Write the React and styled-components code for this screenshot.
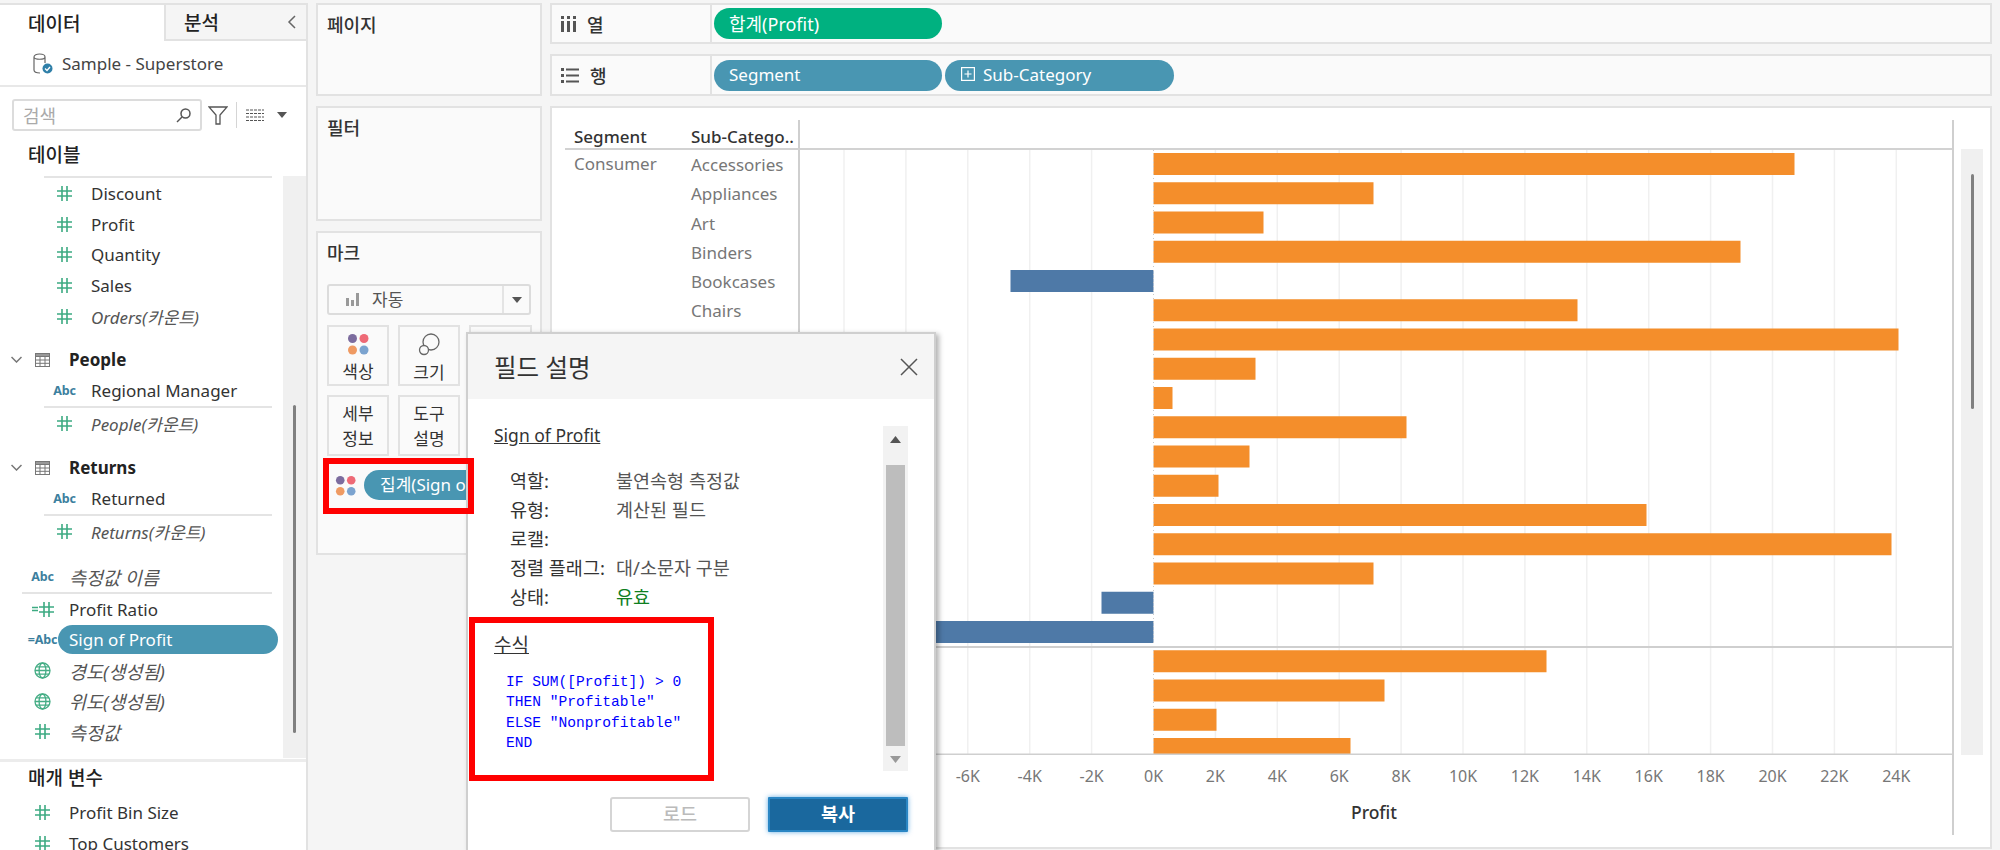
import React from 'react';
import styled, { createGlobalStyle } from 'styled-components';

const FONT = `"Noto Sans", "Noto Sans CJK KR", sans-serif`;

const Global = createGlobalStyle`
  html, body { margin: 0; padding: 0; background: #f5f5f5; }
  body { font-family: ${FONT}; color: #333; }
  * { box-sizing: border-box; }
`;

const Page = styled.div`
  position: relative;
  width: 2000px;
  height: 850px;
  overflow: hidden;
  background: #f5f5f5;
  display: grid;
  grid-template-columns: 308px 226px 1442px;
  column-gap: 8px;
  padding-top: 3px;
`;

/* ---------- sidebar ---------- */
const Sidebar = styled.aside`
  background: #fff;
  border-top: 2px solid #e2e2e2;
  border-right: 2px solid #e2e2e2;
  height: 847px;
  overflow: hidden;
  display: flex;
  flex-direction: column;
`;
const Tabs = styled.div`
  display: grid;
  grid-template-columns: 164px 1fr;
  height: 36px;
  flex: none;
`;
const Tab = styled.div`
  display: flex;
  align-items: center;
  justify-content: space-between;
  font-size: 19px;
  font-weight: 500;
  color: #222;
  padding: 0 10px 0 ${p => (p.$active ? 28 : 18)}px;
  ${p => !p.$active && `background:#f5f5f5;border-left:2px solid #e2e2e2;border-bottom:2px solid #e2e2e2;`}
`;
const Source = styled.div`
  flex: none;
  height: 46px;
  display: flex;
  align-items: center;
  gap: 9px;
  padding: 0 0 0 33px;
  font-size: 17px;
  color: #444;
  border-bottom: 2px solid #e8e8e8;
`;
const SearchRow = styled.div`
  flex: none;
  height: 32px;
  margin-top: 12px;
  padding-left: 12px;
  display: flex;
  align-items: center;
`;
const SearchBox = styled.div`
  width: 190px;
  height: 32px;
  border: 2px solid #dcdcdc;
  border-radius: 3px;
  display: flex;
  align-items: center;
  justify-content: space-between;
  padding: 0 9px 0 9px;
  font-size: 18px;
  color: #aaa;
`;
const ToolDivider = styled.span`
  width: 1px;
  height: 26px;
  background: #d5d5d5;
  margin: 0 9px 0 8px;
`;
const Heading = styled.div`
  flex: none;
  height: ${p => p.$h}px;
  display: flex;
  align-items: center;
  padding-left: 28px;
  font-size: 19px;
  font-weight: 500;
  color: #222;
`;
const ScrollArea = styled.div`
  position: relative;
  flex: none;
  height: 582px;
`;
const ScrollTrack = styled.div`
  position: absolute;
  left: 283px;
  top: 0;
  width: 23px;
  height: 100%;
  background: #f0f0f0;
`;
const ScrollThumb = styled.div`
  position: absolute;
  left: 10px;
  top: 229px;
  width: 3px;
  height: 328px;
  background: #808080;
  border-radius: 2px;
`;
const Rule = styled.div`
  height: 2px;
  margin-left: ${p => p.$left}px;
  width: ${p => 272 - p.$left}px;
  background: #e4e4e4;
`;
const FullRule = styled.div`
  flex: none;
  height: 3px;
  background: #ececec;
  margin-top: 1px;
`;
const Field = styled.div`
  height: 30.7px;
  display: flex;
  align-items: center;
  padding-left: ${p => (p.$deep ? 44 : 22)}px;
  margin-top: ${p => p.$gap || 0}px;
  font-size: ${p => (p.$ko ? 18.5 : 17)}px;
  white-space: nowrap;
  color: ${p => (p.$italic ? '#555' : '#333')};
  font-style: ${p => (p.$italic ? 'italic' : 'normal')};
`;
const FieldIcon = styled.span`
  width: 41px;
  margin-right: 6px;
  flex: none;
  display: flex;
  justify-content: center;
  align-items: center;
  font-style: normal;
`;
const Abc = styled.span`
  font-size: 12.5px;
  font-weight: 700;
  color: #3c7f9e;
  letter-spacing: -.2px;
  white-space: nowrap;
`;
const Selected = styled.span`
  margin-left: -11px;
  width: 220px;
  height: 29px;
  line-height: 29px;
  padding-left: 11px;
  background: #4996b2;
  color: #fff;
  border-radius: 15px;
`;
const Group = styled.div`
  height: 30.7px;
  margin-top: ${p => p.$gap}px;
  display: flex;
  align-items: center;
  padding-left: 11px;
  font-size: 17px;
  font-weight: 700;
  color: #222;
`;
const ParamList = styled.div`
  flex: none;
`;

/* ---------- middle column ---------- */
const Middle = styled.div`
  display: flex;
  flex-direction: column;
`;
const Panel = styled.section`
  height: ${p => p.$h}px;
  margin-bottom: ${p => p.$mb || 0}px;
  background: #fafafa;
  border: 2px solid #e2e2e2;
  padding: 8px 9px 0 9px;
  font-size: 18px;
  line-height: 24px;
  font-weight: 500;
  color: #333;
`;
const MarkSelect = styled.div`
  margin-top: 19px;
  width: 204px;
  height: 31px;
  background: #fafafa;
  border: 2px solid #dcdcdc;
  border-radius: 3px;
  display: grid;
  grid-template-columns: 175px 1fr;
  align-items: center;
  font-size: 17px;
  font-weight: 400;
  color: #555;
`;
const MarkValue = styled.div`
  display: flex;
  align-items: center;
  gap: 11px;
  padding-left: 17px;
  height: 100%;
  border-right: 2px solid #e4e4e4;
`;
const MarkCaret = styled.div`
  display: flex;
  justify-content: center;
`;
const MarkGrid = styled.div`
  margin-top: 10px;
  display: grid;
  grid-template-columns: 62px 62px 63px;
  grid-auto-rows: 61px;
  column-gap: 9px;
  row-gap: 9px;
`;
const MarkCard = styled.div`
  border: 2px solid #e2e2e2;
  background: #fafafa;
  display: flex;
  flex-direction: column;
  align-items: center;
  justify-content: center;
  font-size: 17px;
  font-weight: 400;
  line-height: 25px;
  color: #333;
  text-align: center;
`;
const IconCard = styled(MarkCard)`
  line-height: 22px;
  gap: 6px;
  padding-top: 5px;
`;
const MarkField = styled.div`
  margin-top: 14px;
  display: flex;
  align-items: center;
  gap: 8px;
  padding-left: 8px;
`;
const MarkPill = styled.div`
  width: 140px;
  height: 30px;
  line-height: 30px;
  background: #4996b2;
  color: #fff;
  border-radius: 15px;
  padding-left: 16px;
  font-size: 17px;
  font-weight: 400;
  white-space: nowrap;
  overflow: hidden;
`;

/* ---------- right column ---------- */
const Right = styled.div`
  display: flex;
  flex-direction: column;
`;
const Shelf = styled.div`
  height: ${p => p.$h}px;
  margin-bottom: ${p => p.$mb}px;
  background: #fafafa;
  border: 2px solid #e2e2e2;
  display: flex;
  align-items: center;
`;
const ShelfLabel = styled.div`
  width: 160px;
  height: 100%;
  flex: none;
  display: flex;
  align-items: center;
  gap: 11px;
  padding-left: 9px;
  font-size: 18px;
  font-weight: 500;
  color: #333;
  border-right: 2px solid #e2e2e2;
`;
const Pills = styled.div`
  display: flex;
  gap: 3px;
  padding-left: 2px;
`;
const Pill = styled.div`
  height: 31px;
  width: ${p => p.$w}px;
  border-radius: 16px;
  background: ${p => (p.$green ? '#00b180' : '#4996b2')};
  color: #fff;
  display: flex;
  align-items: center;
  gap: 8px;
  padding: 0 0 2px ${p => p.$pl || 15}px;
  font-size: ${p => p.$fs || 17}px;
`;
const MainPanel = styled.main`
  height: 743px;
  background: #fff;
  border: 2px solid #e2e2e2;
  padding: 12px 7px 0 13px;
  display: flex;
`;
const ChartGrid = styled.div`
  width: 1389px;
  height: 715px;
  display: grid;
  grid-template-columns: 235px 1152px;
  grid-template-rows: 30px 605px 80px;
  border-right: 2px solid #cfcfcf;
`;
const HeaderCell = styled.div`
  display: grid;
  grid-template-columns: 117px 1fr;
  align-items: center;
  padding: 4px 0 0 9px;
  font-size: 17px;
  font-weight: 500;
  white-space: nowrap;
  color: #333;
  border-bottom: 2px solid #d2d2d2;
  border-right: 2px solid #cfcfcf;
`;
const HeaderBlank = styled.div`
  border-bottom: 2px solid #d2d2d2;
`;
const RowHeaders = styled.div`
  display: grid;
  grid-template-columns: 117px 1fr;
  padding-left: 9px;
  border-right: 2px solid #cfcfcf;
  font-size: 17px;
  color: #777;
`;
const SegmentName = styled.div`
  line-height: 27px;
`;
const SubName = styled.div`
  height: 29.25px;
  line-height: 29.25px;
`;
const Plot = styled.svg`
  display: block;
`;
const ChartScroll = styled.div`
  position: relative;
  margin: 29px 0 0 7px;
  width: 23px;
  height: 606px;
  background: #f0f0f0;
`;
const ChartThumb = styled.div`
  position: absolute;
  left: 10px;
  top: 25px;
  width: 3px;
  height: 235px;
  background: #808080;
  border-radius: 2px;
`;

/* ---------- dialog ---------- */
const Dialog = styled.div`
  position: absolute;
  left: 466px;
  top: 332px;
  width: 470px;
  height: 518px;
  background: #fff;
  border: 2px solid #cfcfcf;
  border-bottom: none;
  box-shadow: 3px 2px 5px rgba(0, 0, 0, .3);
  display: flex;
  flex-direction: column;
`;
const DialogHead = styled.header`
  height: 65px;
  flex: none;
  background: #f5f5f5;
  display: flex;
  align-items: center;
  justify-content: space-between;
  padding: 0 16px 0 26px;
  font-size: 24.5px;
  font-weight: 400;
  color: #333;
`;
const DialogBody = styled.div`
  display: flex;
  height: 372px;
  flex: none;
`;
const DialogText = styled.div`
  width: 415px;
  padding: 24px 0 0 26px;
  color: #333;
`;
const Underlined = styled.div`
  font-size: ${p => p.$fs || 17.5}px;
  line-height: 24px;
  font-weight: 400;
  text-decoration: underline;
  margin-top: ${p => p.$mt || 0}px;
`;
const Props = styled.div`
  margin-top: 18px;
  padding-left: 16px;
  display: grid;
  grid-template-columns: 106px 1fr;
  grid-auto-rows: 29.2px;
  align-items: center;
  font-size: 18.5px;
  white-space: nowrap;
`;
const PropValue = styled.div`
  color: ${p => p.$color || '#555'};
`;
const Code = styled.pre`
  margin: 15px 0 0 12px;
  font-family: "Liberation Mono", monospace;
  font-size: 14.6px;
  line-height: 20.5px;
  color: #0000ff;
`;
const DialogScroll = styled.div`
  width: 25px;
  height: 345px;
  margin-top: 27px;
  background: #f2f2f2;
  display: flex;
  flex-direction: column;
  align-items: center;
  justify-content: space-between;
  padding: 10px 0 8px;
  position: relative;
`;
const DialogThumb = styled.div`
  position: absolute;
  left: 3px;
  top: 39px;
  width: 19px;
  height: 281px;
  background: #bdbdbd;
`;
const Buttons = styled.footer`
  display: flex;
  justify-content: flex-end;
  gap: 18px;
  padding: 26px 26px 0 0;
`;
const Button = styled.button`
  width: 140px;
  height: 35px;
  padding: 0;
  font-family: ${FONT};
  font-size: 18.5px;
  line-height: 1;
  font-weight: ${p => (p.$primary ? 700 : 500)};
  border-radius: ${p => (p.$primary ? 1 : 3)}px;
  color: ${p => (p.$primary ? '#fff' : '#bbb')};
  background: ${p => (p.$primary ? '#1a689e' : '#fff')};
  border: 2px solid ${p => (p.$primary ? '#2a86c4' : '#d5d5d5')};
  box-shadow: ${p => (p.$primary ? '0 0 5px rgba(60,150,220,.8)' : 'none')};
`;
const Highlight = styled.div`
  position: absolute;
  left: ${p => p.$x}px;
  top: ${p => p.$y}px;
  width: ${p => p.$w}px;
  height: ${p => p.$h}px;
  border: 6px solid #ff0000;
  pointer-events: none;
`;

/* ---------- icons ---------- */
const Hash = () => (
  <svg width="15" height="15" viewBox="0 0 15 15" stroke="#3dab82" strokeWidth="1.6" fill="none">
    <path d="M5 0v15M10 0v15M0 5h15M0 10h15" />
  </svg>
);
const CalcRow = styled.span`
  display: flex;
  align-items: center;
  gap: 1px;
`;
const CalcHash = () => (
  <CalcRow>
    <svg width="6" height="6" viewBox="0 0 6 6" stroke="#3dab82" strokeWidth="1.4"><path d="M0 1.5h6M0 4.5h6" /></svg>
    <Hash />
  </CalcRow>
);
const Globe = () => (
  <svg width="17" height="17" viewBox="0 0 17 17" stroke="#45ad85" strokeWidth="1.3" fill="none">
    <circle cx="8.5" cy="8.5" r="7.5" />
    <ellipse cx="8.5" cy="8.5" rx="3.4" ry="7.5" />
    <path d="M1 8.5h15M2 4.8h13M2 12.2h13" />
  </svg>
);
const TableSvg = styled.svg`
  margin: 0 19px 0 13px;
`;
const TableIcon = () => (
  <TableSvg width="15" height="14" viewBox="0 0 15 14" fill="none" stroke="#777" strokeWidth="1">
    <rect x=".5" y=".5" width="14" height="13" />
    <rect x=".5" y=".5" width="14" height="3" fill="#999" />
    <path d="M.5 7h14M.5 10.300h14M5 3.500v10M10 3.500v10" />
  </TableSvg>
);
const Chevron = () => (
  <svg width="11" height="7" viewBox="0 0 11 7" fill="none" stroke="#777" strokeWidth="1.5"><path d="M.5 1l5 5 5-5" /></svg>
);
const Dots = ({ size = 22 }) => (
  <svg width={size} height={size} viewBox="0 0 22 22">
    <circle cx="5.500" cy="5.500" r="4.500" fill="#7c6c9e" />
    <circle cx="17" cy="5.500" r="4.500" fill="#ee6a76" />
    <circle cx="5.500" cy="17" r="4.500" fill="#ef9a62" />
    <circle cx="17" cy="17" r="4.500" fill="#7ba3cf" />
  </svg>
);
const Caret = ({ color = '#555' }) => (
  <svg width="10" height="6" viewBox="0 0 10 6"><path d="M0 0h10L5 6z" fill={color} /></svg>
);
const FilterSvg = styled.svg`
  margin-left: 6px;
`;
const CaretGap = styled.span`
  width: 13px;
`;

const Fld = ({ deep, italic, ko, gap, icon, children }) => (
  <Field $deep={deep} $italic={italic} $ko={ko} $gap={gap}>
    <FieldIcon>{icon}</FieldIcon>
    {children}
  </Field>
);

/* ---------- chart data ---------- */
const ZERO = 353.5;
const BAR_ENDS = [1795, 1374, 1264, 1741, 1011, 1578, 1899, 1256, 1173, 1407, 1250, 1219, 1647, 1892, 1374, 1102, 800, 1547, 1385, 1217, 1351];
const TICKS = [-6, -4, -2, 0, 2, 4, 6, 8, 10, 12, 14, 16, 18, 20, 22, 24];
const GRID = [-10, -8, -6, -4, -2, 2, 4, 6, 8, 10, 12, 14, 16, 18, 20, 22, 24];
const xOf = k => ZERO + k * 30.95;
const SUBS = ['Accessories', 'Appliances', 'Art', 'Binders', 'Bookcases', 'Chairs'];

export default function App() {
  return (
    <Page>
      <Global />
      <Sidebar>
        <Tabs>
          <Tab $active>데이터</Tab>
          <Tab>
            분석
            <svg width="9" height="14" viewBox="0 0 9 14" fill="none" stroke="#666" strokeWidth="1.500"><path d="M8 1L2 7l6 6" /></svg>
          </Tab>
        </Tabs>
        <Source>
          <svg width="20" height="21" viewBox="0 0 20 21" fill="none">
            <path d="M1 4c0-4 11-4 11 0v6M1 4v13c0 2 3 3 6 3M1 4c0 3 11 3 11 0" stroke="#666" strokeWidth="1.200" />
            <circle cx="14.500" cy="15.500" r="5" fill="#2f7fa8" />
            <path d="M12 15.500l2 2 3-3.500" stroke="#fff" strokeWidth="1.300" fill="none" />
          </svg>
          Sample - Superstore
        </Source>
        <SearchRow>
          <SearchBox>
            검색
            <svg width="15" height="15" viewBox="0 0 15 15" fill="none" stroke="#555" strokeWidth="1.500"><circle cx="9.500" cy="5.500" r="4.500" /><path d="M6 9l-5 5" /></svg>
          </SearchBox>
          <FilterSvg width="20" height="19" viewBox="0 0 20 19" fill="none" stroke="#555" strokeWidth="1.300"><path d="M1 1h18l-7 8v9h-4V9z" /></FilterSvg>
          <ToolDivider />
          <svg width="18" height="13" viewBox="0 0 18 13" stroke="#555" strokeWidth="1.200" fill="none"><path d="M0 1h18M0 4.500h18M0 8h18M0 11.500h18" strokeDasharray="3 1" /></svg>
          <CaretGap />
          <Caret />
        </SearchRow>
        <Heading $h={45}>테이블</Heading>
        <ScrollArea>
          <ScrollTrack><ScrollThumb /></ScrollTrack>
          <Rule $left={44} />
          <Fld deep icon={<Hash />}>Discount</Fld>
          <Fld deep icon={<Hash />}>Profit</Fld>
          <Fld deep icon={<Hash />}>Quantity</Fld>
          <Fld deep icon={<Hash />}>Sales</Fld>
          <Fld deep italic icon={<Hash />}>Orders(카운트)</Fld>
          <Group $gap={13}><Chevron /><TableIcon />People</Group>
          <Fld deep icon={<Abc>Abc</Abc>}>Regional Manager</Fld>
          <Rule $left={44} />
          <Fld deep italic icon={<Hash />}>People(카운트)</Fld>
          <Group $gap={14}><Chevron /><TableIcon />Returns</Group>
          <Fld deep icon={<Abc>Abc</Abc>}>Returned</Fld>
          <Rule $left={44} />
          <Fld deep italic icon={<Hash />}>Returns(카운트)</Fld>
          <Fld italic ko gap={14.6} icon={<Abc>Abc</Abc>}>측정값 이름</Fld>
          <Rule $left={22} />
          <Fld icon={<CalcHash />}>Profit Ratio</Fld>
          <Fld icon={<Abc>=Abc</Abc>}><Selected>Sign of Profit</Selected></Fld>
          <Fld italic ko icon={<Globe />}>경도(생성됨)</Fld>
          <Fld italic ko icon={<Globe />}>위도(생성됨)</Fld>
          <Fld italic ko icon={<Hash />}>측정값</Fld>
        </ScrollArea>
        <FullRule />
        <Heading $h={30}>매개 변수</Heading>
        <ParamList>
          <Fld gap={5} icon={<Hash />}>Profit Bin Size</Fld>
          <Fld icon={<Hash />}>Top Customers</Fld>
        </ParamList>
      </Sidebar>

      <Middle>
        <Panel $h={93} $mb={10}>페이지</Panel>
        <Panel $h={115} $mb={10}>필터</Panel>
        <Panel $h={324}>
          마크
          <MarkSelect>
            <MarkValue>
              <svg width="15" height="13" viewBox="0 0 15 13" fill="#999"><rect x="0" y="5" width="3" height="8" /><rect x="5" y="7" width="3" height="6" /><rect x="10" y="0" width="3" height="13" /></svg>
              자동
            </MarkValue>
            <MarkCaret><Caret /></MarkCaret>
          </MarkSelect>
          <MarkGrid>
            <IconCard><Dots size={22} />색상</IconCard>
            <IconCard>
              <svg width="22" height="23" viewBox="0 0 22 23" fill="none" stroke="#666" strokeWidth="1.300"><circle cx="13" cy="9" r="8" /><circle cx="6" cy="17" r="4.500" fill="#fafafa" /></svg>
              크기
            </IconCard>
            <MarkCard />
            <MarkCard>세부<br />정보</MarkCard>
            <MarkCard>도구<br />설명</MarkCard>
          </MarkGrid>
          <MarkField><Dots size={21} /><MarkPill>집계(Sign of Profit)</MarkPill></MarkField>
        </Panel>
      </Middle>

      <Right>
        <Shelf $h={41} $mb={10}>
          <ShelfLabel>
            <svg width="15" height="16" viewBox="0 0 15 16" fill="#555"><rect x="0" y="0" width="3" height="3" /><rect x="6" y="0" width="3" height="3" /><rect x="12" y="0" width="3" height="3" /><rect x="0" y="5" width="3" height="11" /><rect x="6" y="5" width="3" height="11" /><rect x="12" y="5" width="3" height="11" /></svg>
            <span>열</span>
          </ShelfLabel>
          <Pills><Pill $green $w={228} $fs={18}>합계(Profit)</Pill></Pills>
        </Shelf>
        <Shelf $h={42} $mb={10}>
          <ShelfLabel>
            <svg width="18" height="15" viewBox="0 0 18 15" fill="#555"><rect x="0" y="0" width="3" height="3" /><rect x="5" y="0.500" width="13" height="2" /><rect x="0" y="6" width="3" height="3" /><rect x="5" y="6.500" width="13" height="2" /><rect x="0" y="12" width="3" height="3" /><rect x="5" y="12.500" width="13" height="2" /></svg>
            <span>행</span>
          </ShelfLabel>
          <Pills>
            <Pill $w={228}>Segment</Pill>
            <Pill $w={229} $pl={16}>
              <svg width="14" height="14" viewBox="0 0 14 14" fill="none" stroke="#fff" strokeWidth="1.200"><rect x=".6" y=".6" width="12.800" height="12.800" /><path d="M3.500 7h7M7 3.500v7" /></svg>
              Sub-Category
            </Pill>
          </Pills>
        </Shelf>
        <MainPanel>
          <ChartGrid>
            <HeaderCell><span>Segment</span><span>Sub-Catego..</span></HeaderCell>
            <HeaderBlank />
            <RowHeaders>
              <SegmentName>Consumer</SegmentName>
              <div>{SUBS.map(s => <SubName key={s}>{s}</SubName>)}</div>
            </RowHeaders>
            <Plot width="1152" height="605" viewBox="0 0 1152 605">
              {GRID.map(k => <line key={k} x1={xOf(k)} x2={xOf(k)} y1="0" y2="605" stroke="#f0f0f0" strokeWidth="1.500" />)}
              {BAR_ENDS.map((end, i) => {
                const e = end - 800.5;
                const y = 3 + i * 29.25;
                return <rect key={i} x={Math.min(e, ZERO)} y={y} width={Math.abs(e - ZERO)} height="22" fill={e > ZERO ? '#f48e2b' : '#4e79a7'} />;
              })}
              <line x1={ZERO} x2={ZERO} y1="0" y2="605" stroke="#c9c9c9" strokeDasharray="1 3" />
              <line x1="0" x2="1152" y1="497" y2="497" stroke="#cfcfcf" strokeWidth="2" />
              <line x1="0" x2="1152" y1="604.500" y2="604.500" stroke="#cfcfcf" strokeWidth="2" />
            </Plot>
            <div />
            <Plot width="1152" height="80" viewBox="0 0 1152 80">
              {TICKS.map(k => (
                <text key={k} x={xOf(k)} y="27" textAnchor="middle" fontSize="16" fill="#777" fontFamily={FONT}>{k}K</text>
              ))}
              <text x="574" y="64" textAnchor="middle" fontSize="17.500" fontWeight="500" fill="#333" fontFamily={FONT}>Profit</text>
            </Plot>
          </ChartGrid>
          <ChartScroll><ChartThumb /></ChartScroll>
        </MainPanel>
      </Right>

      <Dialog>
        <DialogHead>
          필드 설명
          <svg width="18" height="18" viewBox="0 0 18 18" stroke="#555" strokeWidth="1.500"><path d="M1 1l16 16M17 1L1 17" /></svg>
        </DialogHead>
        <DialogBody>
          <DialogText>
            <Underlined>Sign of Profit</Underlined>
            <Props>
              <div>역할:</div><PropValue>불연속형 측정값</PropValue>
              <div>유형:</div><PropValue>계산된 필드</PropValue>
              <div>로캘:</div><PropValue />
              <div>정렬 플래그:</div><PropValue>대/소문자 구분</PropValue>
              <div>상태:</div><PropValue $color="#0f7f1f">유효</PropValue>
            </Props>
            <Underlined $mt={22} $fs={19}>수식</Underlined>
            <Code>{`IF SUM([Profit]) > 0
THEN "Profitable"
ELSE "Nonprofitable"
END`}</Code>
          </DialogText>
          <DialogScroll>
            <DialogThumb />
            <svg width="11" height="7" viewBox="0 0 11 7"><path d="M0 7h11L5.500 0z" fill="#555" /></svg>
            <svg width="11" height="7" viewBox="0 0 11 7"><path d="M0 0h11L5.500 7z" fill="#999" /></svg>
          </DialogScroll>
        </DialogBody>
        <Buttons>
          <Button>로드</Button>
          <Button $primary>복사</Button>
        </Buttons>
      </Dialog>

      <Highlight $x={323} $y={458} $w={151} $h={56} />
      <Highlight $x={469} $y={617} $w={245} $h={164} />
    </Page>
  );
}
